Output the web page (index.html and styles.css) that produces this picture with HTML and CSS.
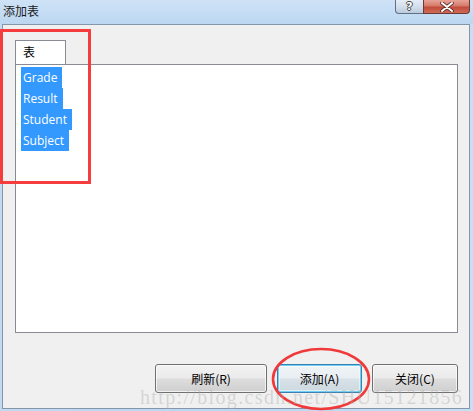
FILE: index.html
```html
<!DOCTYPE html>
<html>
<head>
<meta charset="utf-8">
<link rel="stylesheet" href="styles.css">
</head>
<body>
<div class="window">
  <div class="titlebar">
    <span class="title">添加表</span>
    <div class="caption">
      <div class="cap-btn help">?</div>
      <div class="cap-btn close">
        <svg width="14" height="10" viewBox="0 0 14 10"><path d="M2 1 L12 9 M12 1 L2 9" stroke="#5a2a24" stroke-width="3.6" stroke-linecap="round"/><path d="M2 1 L12 9 M12 1 L2 9" stroke="#ffffff" stroke-width="2" stroke-linecap="round"/></svg>
      </div>
    </div>
  </div>
  <div class="client">
    <div class="tabs">
      <div class="tab">表</div>
    </div>
    <div class="panel">
      <div class="item">Grade</div>
      <div class="item">Result</div>
      <div class="item">Student</div>
      <div class="item">Subject</div>
    </div>
    <div class="buttons">
      <div class="btn w1">刷新(R)</div>
      <div class="btn w2 focus">添加(A)</div>
      <div class="btn w3">关闭(C)</div>
    </div>
  </div>
  <div class="mark-rect"></div>
  <svg class="mark-ellipse" width="104" height="66" viewBox="0 0 104 66"><ellipse cx="51" cy="32" rx="48" ry="30" fill="none" stroke="#f03a3a" stroke-width="2.6"/></svg>
  <div class="watermark">http://blog.csdn.net/SHU15121856</div>
</div>
</body>
</html>
```
FILE: styles.css
```css
html, body {
  margin: 0;
  padding: 0;
}
body {
  width: 473px;
  height: 411px;
  overflow: hidden;
  font-family: "Noto Sans CJK SC", "Noto Sans", sans-serif;
}
.window {
  position: relative;
  width: 473px;
  height: 411px;
  box-sizing: border-box;
  background: linear-gradient(90deg, #c2daf2 0%, #bcd7f3 50%, #c6dff6 100%);
  display: flex;
  flex-direction: column;
}
.titlebar {
  height: 24px;
  display: flex;
  justify-content: space-between;
  align-items: flex-start;
  background: linear-gradient(180deg, #cfe3f7 0%, #bcd6f1 100%);
}
.title {
  font-size: 12px;
  line-height: 14px;
  margin: 4px 0 0 3px;
  color: #1a1a1a;
}
.caption {
  display: flex;
  margin-right: 3px;
}
.cap-btn {
  height: 14px;
  box-sizing: border-box;
  border: 1px solid #5f7187;
  border-top: none;
  display: flex;
  align-items: center;
  justify-content: center;
}
.help {
  width: 28px;
  border-radius: 0 0 0 4px;
  border-right: none;
  background: linear-gradient(180deg, #e4edf7 0%, #d3dfec 50%, #bccbdc 100%);
  font-family: "DejaVu Sans", sans-serif;
  font-weight: bold;
  font-size: 11px;
  line-height: 12px;
  color: #fff;
  text-shadow: 1px 0 0 #444, -1px 0 0 #444, 0 1px 0 #444, 0 -1px 0 #444;
}
.close {
  width: 47px;
  border-radius: 0 0 4px 0;
  background: linear-gradient(180deg, #e8a397 0%, #d57a6b 45%, #c24a3a 55%, #cf6b58 100%);
  border-color: #6b3a34;
}
.client {
  flex: 1;
  margin: 0 3px 2px 2px;
  border: 1px solid #8596ab;
  background: #f0f0f0;
  display: flex;
  flex-direction: column;
  padding: 15px 11px 0 12px;
}
.tabs {
  display: flex;
}
.tab {
  width: 51px;
  height: 24px;
  box-sizing: border-box;
  border: 1px solid #898c95;
  border-bottom: none;
  background: #fff;
  font-size: 12px;
  line-height: 22px;
  padding-left: 7px;
  color: #000;
}
.panel {
  height: 269px;
  box-sizing: border-box;
  border: 1px solid #898c95;
  background: #fff;
  padding: 2px 0 0 5px;
  display: flex;
  flex-direction: column;
  align-items: flex-start;
}
.item {
  background: #3399ff;
  color: #fff;
  font-family: "Open Sans", "Noto Sans", sans-serif;
  font-size: 12px;
  line-height: 21px;
  height: 21px;
  padding: 0 5px 0 2px;
}
.buttons {
  display: flex;
  justify-content: flex-end;
  gap: 10px;
  margin-top: 31px;
}
.btn {
  height: 29px;
  box-sizing: border-box;
  border: 1px solid #707070;
  border-radius: 3px;
  background: linear-gradient(180deg, #f2f2f2 0%, #ebebeb 48%, #dddddd 52%, #cfcfcf 100%);
  box-shadow: inset 0 0 0 1px rgba(255,255,255,0.7);
  font-size: 12px;
  line-height: 27px;
  text-align: center;
  color: #000;
}
.btn.focus {
  border-color: #3c7fb1;
  background: linear-gradient(180deg, #f0f4f7 0%, #e8eef2 48%, #d8e2e8 52%, #ccd8df 100%);
  box-shadow: inset 0 0 0 1px #6fd0f6, inset 0 0 0 2px rgba(255,255,255,0.5);
}
.w1 { width: 112px; }
.w2 { width: 85px; }
.w3 { width: 86px; }
.mark-rect {
  position: absolute;
  left: 0;
  top: 29px;
  width: 91px;
  height: 155px;
  box-sizing: border-box;
  border: 3px solid #f53d3d;
}
.mark-ellipse {
  position: absolute;
  left: 270px;
  top: 347px;
}
.watermark {
  position: absolute;
  left: 140px;
  top: 386px;
  font-family: "Liberation Serif", serif;
  font-size: 20px;
  letter-spacing: 1.35px;
  color: rgba(170,170,170,0.4);
  white-space: nowrap;
}
```
